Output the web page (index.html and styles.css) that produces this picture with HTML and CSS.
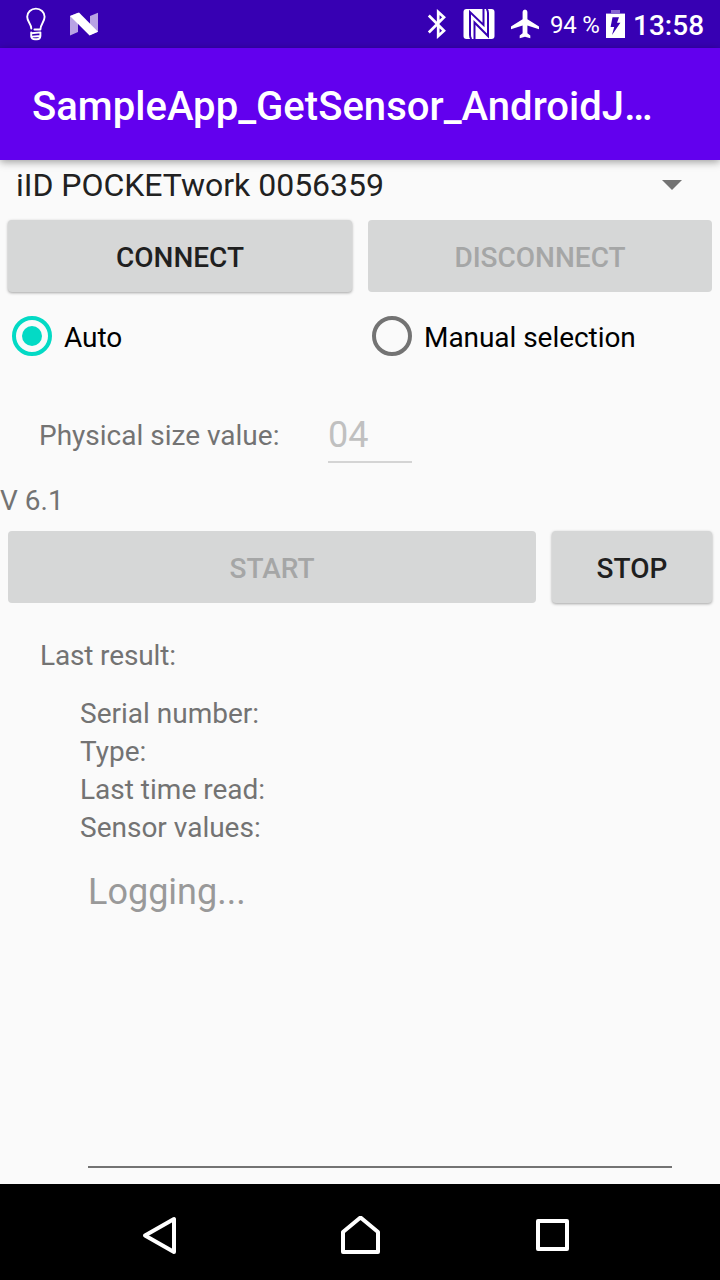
FILE: index.html
```html
<!DOCTYPE html>
<html lang="en">
<head>
<meta charset="utf-8">
<title>SampleApp_GetSensor</title>
<link rel="stylesheet" href="styles.css">
</head>
<body>
<div class="screen">
  <header class="status-bar">
    <svg class="icon-bulb" width="20" height="34" viewBox="0 0 20 34" fill="none" stroke="#fff" stroke-width="1.9" stroke-linecap="round" stroke-linejoin="round"><path d="M5.3 21.5C5.3 17 1.2 15 1.2 9.8A8.7 8.2 0 0 1 18.6 9.8C18.6 15 14.4 17 14.4 22.5H8.4"/><path d="M5.2 25.5V29.5Q5.5 32.3 9 32.3H11Q14.2 32.3 14.4 29L6.5 29.6M5.4 26.2L14.4 25.4V29"/></svg>
    <svg class="icon-n" width="28" height="24" viewBox="0 0 28 24"><path d="M0 4L8 .8V20L0 23.4ZM20 4L28 .8V19.7L20 23Z" fill="#b8a3e4"/><path d="M0 4L9 .4L28 19.8L19.6 23.4Z" fill="#fff"/></svg>
    <div class="status-right">
      <svg class="icon-bt" width="20" height="30" viewBox="0 0 20 30" fill="none" stroke="#fff" stroke-width="2.7"><path d="M1.8 6.5L17 21.7L11.2 27V3L17 8.3L1.8 23.5"/></svg>
      <svg class="icon-nfc" width="32" height="32" viewBox="0 0 32 32"><rect x=".5" y="1" width="31" height="30" rx="3" fill="#fff"/><path d="M8.5 31Q7 30 7 27V4L20.5 17V1M11.5 31V14.5L25 28V5Q25 2 23.5 1" fill="none" stroke="#3700b3" stroke-width="2"/></svg>
      <svg class="icon-plane" width="28" height="30" viewBox="0 0 28 30"><path d="M28 20.2V17.4L16.4 10.3V2.8Q16.2 .5 14 .4Q11.8 .5 11.6 2.8V10.3L0 17.4V20.2L11.6 16.6V24.2L8.7 26.6V29.2L14 27.8L19.3 29.2V26.6L16.4 24.2V16.6Z" fill="#fff"/></svg>
      <span class="battery-text">94 %</span>
      <svg class="icon-battery" width="19" height="30" viewBox="0 0 19 30"><path d="M5 1H14V4H19V6H0V4H5Z" fill="#8766d1"/><path d="M0 5H19V29H0Z" fill="#fff"/><path d="M6.5 8.3H13L11 13.7H14.4L6 26L8.2 18H4.6Z" fill="#3700b3"/></svg>
      <span class="clock">13:58</span>
    </div>
  </header>
  <div class="app-bar"><h1 class="app-title">SampleApp_GetSensor_AndroidJ…</h1></div>
  <main class="content">
    <div class="spinner"><span class="spinner-text">iID POCKETwork 0056359</span><svg width="20" height="10" viewBox="0 0 20 10"><path d="M0 0H20L10 10Z" fill="#737373"/></svg></div>
    <div class="button-row connect-row">
      <button class="btn">CONNECT</button>
      <button class="btn" disabled>DISCONNECT</button>
    </div>
    <div class="radio-row">
      <div class="radio"><span class="ring ring-on"></span><span class="radio-label">Auto</span></div>
      <div class="radio"><span class="ring"></span><span class="radio-label">Manual selection</span></div>
    </div>
    <div class="size-row"><span class="size-label">Physical size value:</span><span class="size-input">04</span></div>
    <div class="version">V 6.1</div>
    <div class="button-row start-row">
      <button class="btn" disabled>START</button>
      <button class="btn">STOP</button>
    </div>
    <div class="last-result">Last result:</div>
    <div class="details">
      <div class="serial">Serial number:</div>
      <div class="type">Type:</div>
      <div class="time">Last time read:</div>
      <div class="values">Sensor values:</div>
    </div>
    <div class="log">Logging...</div>
  </main>
  <nav class="nav-bar">
    <svg width="40" height="40" viewBox="0 0 40 40"><path d="M5 19.5L34 3V36Z"/></svg>
    <svg width="40" height="40" viewBox="0 0 40 40"><path d="M3 36V16L20.5 1.5L38 16V36Z"/></svg>
    <svg width="40" height="40" viewBox="0 0 40 40"><path d="M6 5H35V33H6Z"/></svg>
  </nav>
</div>
</body>
</html>
```
FILE: styles.css
```css
* { box-sizing: border-box; }
body { margin: 0; font-family: Roboto, sans-serif; }
.screen { width: 720px; height: 1280px; display: flex; flex-direction: column; background: #fafafa; color: #737373; font-size: 28px; line-height: 38px; overflow: hidden; }
svg { display: block; flex: none; }

.status-bar { height: 48px; flex: none; display: flex; align-items: center; background: #3700b3; color: #fff; padding: 0 16px 0 26px; }
.icon-n { margin-left: 24px; }
.status-right { margin-left: auto; display: flex; align-items: center; }
.icon-nfc { margin-left: 16px; }
.icon-plane { margin-left: 16px; }
.battery-text { margin-left: 11px; width: 50px; font-size: 24px; letter-spacing: -.2px; white-space: nowrap; padding-top: 2px; }
.icon-battery { margin-left: 6px; }
.clock { margin-left: 8px; width: 71px; font-size: 28px; font-weight: 500; white-space: nowrap; padding-top: 3px; }

.app-bar { height: 112px; flex: none; background: #6200ee; color: #fff; padding: 35px 32px 0; box-shadow: 0 2px 8px rgba(0,0,0,.38); z-index: 1; }
.app-title { margin: 0; font-size: 40px; line-height: 48px; font-weight: 500; letter-spacing: .03px; white-space: nowrap; }

.content { flex: 1; min-height: 0; display: flex; flex-direction: column; }
.spinner { height: 52px; flex: none; display: flex; align-items: center; justify-content: space-between; padding: 0 38px 3px 16px; }
.spinner-text { font-size: 32px; color: #212121; letter-spacing: -.02px; }

.button-row { display: grid; gap: 16px; padding: 8px; height: 88px; flex: none; }
.connect-row { grid-template-columns: 1fr 1fr; }
.start-row { grid-template-columns: 528px 1fr; }
.btn { border: 0; border-radius: 4px; background: #d6d7d7; color: #1f1f1f; font: 500 28px/38px Roboto, sans-serif; padding: 4px 0 0; box-shadow: 0 1px 3px rgba(0,0,0,.35); }
.btn:disabled { color: #a5a6a6; box-shadow: none; }

.radio-row { display: grid; grid-template-columns: 1fr 1fr; height: 72px; flex: none; }
.radio { display: flex; align-items: center; gap: 12px; padding-left: 12px; color: #000; }
.ring { width: 40px; height: 40px; border: 4px solid #737373; border-radius: 50%; display: grid; place-items: center; }
.ring-on { border-color: #03dac5; }
.ring-on::after { content: ""; width: 20px; height: 20px; border-radius: 50%; background: #03dac5; }
.radio-label { padding-top: 4px; letter-spacing: -.05px; }

.size-row { display: flex; align-items: flex-start; height: 91px; flex: none; margin-top: 20px; padding: 0 39px; }
.size-label { width: 289px; padding-top: 25px; }
.size-input { width: 84px; height: 71px; padding-top: 19px; border-bottom: 2px solid #d4d4d4; font-size: 36px; line-height: 48px; color: #c0c0c0; }
.version { height: 41px; flex: none; margin-top: -1px; }
.last-result { padding: 26px 40px 0; letter-spacing: -.15px; }
.details { padding: 20px 80px 0; }
.log { margin: 21px 48px 16px 88px; flex: 1; border-bottom: 2px solid #737373; font-size: 36px; line-height: 48px; color: #999; }

.nav-bar { height: 96px; flex: none; background: #000; display: grid; grid-template-columns: 200px 192px 40px; padding: 32px 0 0 140px; }
.nav-bar svg { fill: none; stroke: #fff; stroke-width: 4; stroke-linejoin: round; }
```
